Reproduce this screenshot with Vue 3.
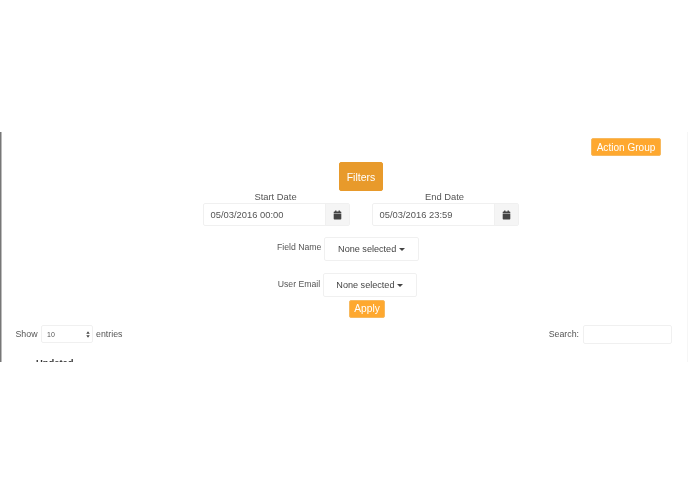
<script setup>
const dates = [
  { label: 'Start Date', value: '05/03/2016 00:00' },
  { label: 'End Date', value: '05/03/2016 23:59' }
]
</script>

<template>
  <div class="page">
    <main class="stage">
      <div class="action-row"><button class="btn action">Action Group</button></div>
      <div class="filters-row"><button class="btn filters">Filters</button></div>
      <div class="dates">
        <div v-for="d in dates" :key="d.label" class="date">
          <label class="date-label">{{ d.label }}</label>
          <div class="input-group">
            <div class="date-input">{{ d.value }}</div>
            <div class="addon">
              <svg viewBox="0 0 13 14" width="9" height="10" aria-hidden="true">
                <path fill="#444" d="M1 5h11v7.5a1 1 0 0 1-1 1H2a1 1 0 0 1-1-1zM2 2h1V.5h2V2h3V.5h2V2h1a1 1 0 0 1 1 1v1.2H1V3a1 1 0 0 1 1-1z" />
              </svg>
            </div>
          </div>
        </div>
      </div>
      <div class="field field-name">
        <label>Field Name</label>
        <button class="select-btn">None selected<i class="caret"></i></button>
      </div>
      <div class="field user-email">
        <label>User Email</label>
        <button class="select-btn">None selected<i class="caret"></i></button>
      </div>
      <div class="apply-row"><button class="btn apply">Apply</button></div>
      <div class="table-tools">
        <div class="length">
          Show
          <div class="length-select">
            <span>10</span>
            <svg viewBox="0 0 6 10" width="4" height="7" aria-hidden="true">
              <path fill="#444" d="M3 0l2.6 4H.4zM3 10L.4 6h5.2z" />
            </svg>
          </div>
          entries
        </div>
        <div class="search">Search:<div class="search-input"></div></div>
      </div>
      <div class="col-head">Updated</div>
    </main>
  </div>
</template>

<style scoped>
.page {
  width: 695px;
  height: 494px;
  padding-top: 132px;
  box-sizing: border-box;
  background: #fff;
  font-family: "Liberation Sans", Arial, sans-serif;
  font-size: 9.4px;
  color: #555;
}
.stage {
  width: 688px;
  height: 230px;
  box-sizing: border-box;
  overflow: hidden;
  border-left: 1px solid #777;
  border-right: 1px solid #f6f6f6;
  box-shadow: inset 1px 0 0 #bbb;
  filter: blur(0.3px);
}
button {
  font-family: inherit;
  margin: 0;
  cursor: default;
}
.btn {
  display: block;
  padding: 0;
  border-radius: 2px;
  color: #fff;
  background: #fea82f;
  border: 1px solid #f7b95f;
}
.action-row {
  display: flex;
  justify-content: flex-end;
  padding: 6px 26px 0 0;
}
.action {
  width: 70px;
  height: 18px;
  font-size: 10.05px;
}
.filters-row {
  display: flex;
  padding: 6px 0 0 338px;
}
.filters {
  width: 44px;
  height: 29px;
  padding-top: 1px;
  font-size: 10.5px;
  background: #e89a2b;
  border-color: #e89a2b;
}
.dates {
  display: flex;
  gap: 22px;
  padding-left: 201.5px;
}
.date {
  width: 147px;
}
.date-label {
  display: block;
  height: 11px;
  line-height: 11px;
  margin-right: 1px;
  text-align: center;
}
.input-group {
  display: flex;
  height: 23px;
  margin-top: 1px;
  box-sizing: border-box;
  border: 1px solid #f0f0f0;
  border-radius: 2px;
}
.date-input {
  flex: 1;
  padding-left: 7px;
  line-height: 21px;
  color: #555;
}
.addon {
  width: 23px;
  display: flex;
  align-items: center;
  justify-content: center;
  background: #f5f5f5;
  border-left: 1px solid #f0f0f0;
}
.field {
  display: flex;
  align-items: flex-start;
  gap: 3px;
}
.field label {
  line-height: 11px;
  margin-top: 5px;
  font-size: 8.7px;
}
.field-name {
  padding: 11px 0 0 276px;
}
.user-email {
  padding: 12px 0 0 276.7px;
  gap: 2.5px;
}
.user-email label {
  margin-top: 6px;
}
.select-btn {
  display: flex;
  align-items: center;
  justify-content: center;
  width: 94.5px;
  height: 24px;
  padding: 0;
  font-size: 9.1px;
  color: #444;
  background: #fff;
  border: 1px solid #f0f0f0;
  border-radius: 2px;
}
.caret {
  width: 0;
  height: 0;
  margin-left: 3px;
  border-left: 3px solid transparent;
  border-right: 3px solid transparent;
  border-top: 3px solid #444;
}
.apply-row {
  display: flex;
  padding: 3px 0 0 348px;
}
.apply {
  width: 36px;
  height: 17.5px;
  font-size: 10.2px;
}
.table-tools {
  display: flex;
  justify-content: space-between;
  align-items: center;
  padding: 7px 15px 0 14.5px;
  font-size: 8.8px;
}
.length,
.search {
  display: flex;
  align-items: center;
  gap: 3px;
}
.search {
  gap: 4px;
}
.length-select {
  display: flex;
  align-items: center;
  justify-content: space-between;
  box-sizing: border-box;
  width: 52.5px;
  height: 18px;
  padding: 0 2.5px 0 5.5px;
  border: 1px solid #f0f0f0;
  border-radius: 2px;
  font-size: 7px;
}
.search-input {
  width: 89px;
  height: 19px;
  box-sizing: border-box;
  border: 1px solid #f0f0f0;
  border-radius: 2px;
}
.col-head {
  padding: 13px 0 0 35px;
  line-height: 11px;
  font-weight: 700;
  color: #333;
}
</style>
